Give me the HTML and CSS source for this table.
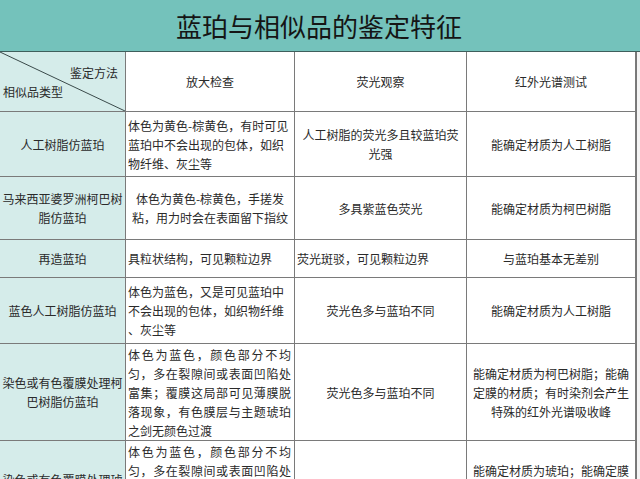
FILE: index.html
```html
<!DOCTYPE html>
<html lang="zh-CN">
<head>
<meta charset="utf-8">
<title>蓝珀与相似品的鉴定特征</title>
<link rel="stylesheet" href="styles.css">
</head>
<body>
<div class="page">
  <div class="title">蓝珀与相似品的鉴定特征</div>
  <div class="table">
    <div class="cell type head-diag">
      <svg class="diag" viewBox="0 0 125 59" preserveAspectRatio="none"><line x1="0" y1="0" x2="125" y2="59" stroke="#3a4a4a" stroke-width="1"/></svg>
      <span class="hd-method">鉴定方法</span>
      <span class="hd-type">相似品类型</span>
    </div>
    <div class="cell center">放大检查</div>
    <div class="cell center">荧光观察</div>
    <div class="cell center last">红外光谱测试</div>

    <div class="cell type center">人工树脂仿蓝珀</div>
    <div class="cell left">体色为黄色-棕黄色，有时可见<br>蓝珀中不会出现的包体，如织<br>物纤维、灰尘等</div>
    <div class="cell center">人工树脂的荧光多且较蓝珀荧<br>光强</div>
    <div class="cell center last">能确定材质为人工树脂</div>

    <div class="cell type center">马来西亚婆罗洲柯巴树<br>脂仿蓝珀</div>
    <div class="cell center">体色为黄色-棕黄色，手搓发<br>粘，用力时会在表面留下指纹</div>
    <div class="cell center">多具紫蓝色荧光</div>
    <div class="cell center last">能确定材质为柯巴树脂</div>

    <div class="cell type center">再造蓝珀</div>
    <div class="cell left">具粒状结构，可见颗粒边界</div>
    <div class="cell left">荧光斑驳，可见颗粒边界</div>
    <div class="cell center last">与蓝珀基本无差别</div>

    <div class="cell type center">蓝色人工树脂仿蓝珀</div>
    <div class="cell left">体色为蓝色，又是可见蓝珀中<br>不会出现的包体，如织物纤维<br>、灰尘等</div>
    <div class="cell center">荧光色多与蓝珀不同</div>
    <div class="cell center last">能确定材质为人工树脂</div>

    <div class="cell type center">染色或有色覆膜处理柯<br>巴树脂仿蓝珀</div>
    <div class="cell dist">
      <span class="ln j">体色为蓝色，颜色部分不均</span>
      <span class="ln j">匀，多在裂隙间或表面凹陷处</span>
      <span class="ln j">富集；覆膜这局部可见薄膜脱</span>
      <span class="ln j">落现象，有色膜层与主题琥珀</span>
      <span class="ln">之剑无颜色过渡</span>
    </div>
    <div class="cell center">荧光色多与蓝珀不同</div>
    <div class="cell center last">能确定材质为柯巴树脂；能确<br>定膜的材质；有时染剂会产生<br>特殊的红外光谱吸收峰</div>

    <div class="cell type center">染色或有色覆膜处理琥<br>珀仿蓝珀</div>
    <div class="cell dist">
      <span class="ln j">体色为蓝色，颜色部分不均</span>
      <span class="ln j">匀，多在裂隙间或表面凹陷处</span>
      <span class="ln j">富集；覆膜这局部可见薄膜脱</span>
      <span class="ln j">落现象，有色膜层与主题琥珀</span>
      <span class="ln">之剑无颜色过渡</span>
    </div>
    <div class="cell center">荧光色多与蓝珀不同</div>
    <div class="cell center last">能确定材质为琥珀；能确定膜<br>的材质；有时染剂会产生特殊<br>的红外光谱吸收峰</div>
  </div>
</div>
</body>
</html>
```

FILE: styles.css
```css
html, body {
  margin: 0;
  padding: 0;
  background: #f4f4f4;
}
body {
  width: 640px;
  height: 479px;
  overflow: hidden;
  font-family: "Noto Sans CJK SC", "Microsoft YaHei", sans-serif;
  color: #2a2a2a;
}
.page {
  width: 640px;
}
.title {
  height: 51px;
  background: #74c2bb;
  border-bottom: 1px solid #3f5f5c;
  display: flex;
  align-items: center;
  justify-content: center;
  font-size: 26px;
  color: #151515;
  letter-spacing: 0;
  padding-right: 2px;
  box-sizing: border-box;
  height: 52px;
}
.table {
  display: grid;
  width: 636px;
  grid-template-columns: 126px 169px 172px 169px;
  grid-template-rows: 60px 65px 63px 38px 66px 97px 97px;
  background: #ffffff;
  border-right: 1px solid #777;
}
.cell {
  border-right: 1px solid #7a7a7a;
  border-bottom: 1px solid #7a7a7a;
  background: #ffffff;
  font-size: 12px;
  line-height: 19px;
  white-space: nowrap;
  display: flex;
  flex-direction: column;
  justify-content: center;
  box-sizing: border-box;
  padding: 0 2px;
}
.cell.last {
  border-right: 1px solid #7a7a7a;
}
.cell.type {
  background: #d5ecea;
}
.center {
  text-align: center;
  align-items: center;
}
.left {
  text-align: left;
  align-items: flex-start;
  padding-left: 2px;
}
.dist {
  align-items: stretch;
  padding: 0 3px 0 2px;
}
.ln {
  display: block;
}
.ln.j {
  text-align: justify;
  text-align-last: justify;
}
.head-diag {
  position: relative;
  justify-content: flex-start;
  padding: 0;
}
.diag {
  position: absolute;
  left: 0;
  top: 0;
  width: 125px;
  height: 59px;
}
.hd-method {
  align-self: flex-end;
  margin-top: 11px;
  margin-right: 7px;
}
.hd-type {
  align-self: flex-start;
  margin-left: 3px;
  margin-top: 0;
}
```
